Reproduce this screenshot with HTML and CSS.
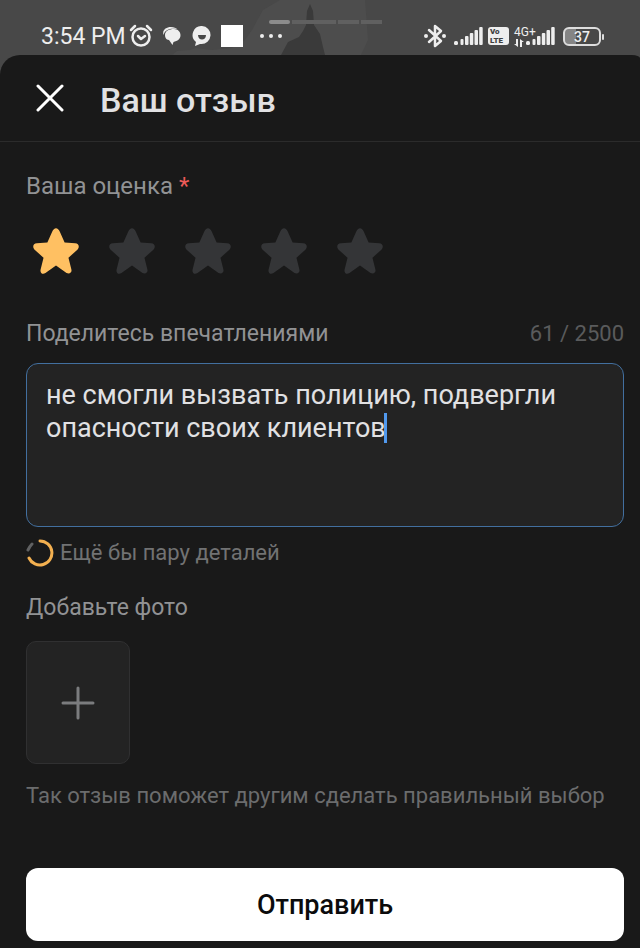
FILE: index.html
```html
<!DOCTYPE html>
<html lang="ru">
<head>
<meta charset="utf-8">
<meta name="viewport" content="width=device-width, initial-scale=1">
<title>Ваш отзыв</title>
<link rel="stylesheet" href="styles.css">
</head>
<body>
<div class="statusbar">
  <svg class="backdrop" viewBox="0 0 640 80" preserveAspectRatio="none" aria-hidden="true">
    <path class="cloud" d="M170 57 177 51 190 50 196 48 212 50 232 48 245 40 252 30 263 10 280 0H365L368 40 360 57Z"/>
    <path class="tower" d="M281 55 288 42 299 37 303 31 306 25 307 11 310 4 313 11 314 25 320 34 323 47 325 55Z"/>
  </svg>
  <div class="pages" aria-hidden="true"><i class="current"></i><i></i><i></i><i></i></div>
  <div class="status-left">
    <span class="clock">3:54 PM</span>
    <svg width="24" height="24" viewBox="0 0 24 24" aria-hidden="true"><g fill="none" stroke="currentColor" stroke-width="2.5" stroke-linecap="round" stroke-linejoin="round"><circle cx="12" cy="13" r="8.5"/><path d="m9 12 3 3 4-3M2 6l4-4M18 2l4 4"/></g></svg>
    <svg class="chat" width="18" height="20" viewBox="0 0 18 20" aria-hidden="true"><path fill="currentColor" d="M0.500 9C-1 4 3 1 8 1c3 0 5 1 6 2C8 2 2 3 .5 9Z"/><path fill="currentColor" d="M2 9c0-4 4-6 9-6 4 0 6.500 3 6.500 6 0 4-3 6-7 7L9.500 19 6 14C3 14 2 11 2 9Z"/></svg>
    <svg class="smile" width="20" height="20" viewBox="0 0 20 20" aria-hidden="true"><path fill="currentColor" d="M10 0a9 9 0 1 1-1 18H8l-5 2 1-4A9 9 0 0 1 10 0Z"/><path fill="#484848" d="M6 9h8c0 6-8 6-8 0Z"/></svg>
    <i class="square"></i>
    <svg class="dots" width="22" height="6" viewBox="0 0 22 6" fill="currentColor" aria-hidden="true"><circle cx="2" cy="3" r="2"/><circle cx="11" cy="3" r="2"/><circle cx="20" cy="3" r="2"/></svg>
  </div>
  <div class="status-right">
    <svg width="22" height="24" viewBox="0 0 22 24" aria-hidden="true"><path fill="none" stroke="currentColor" stroke-width="2.5" stroke-linejoin="round" stroke-linecap="round" d="m5 6 12 11-6 5V2l6 5L5 18"/><circle cx="2" cy="12" r="2" fill="currentColor"/><circle cx="20" cy="12" r="2" fill="currentColor"/></svg>
    <svg class="signal" width="29" height="20" viewBox="0 0 29 20" fill="currentColor" aria-hidden="true"><rect y="15" width="4" height="4" rx="1.500"/><rect x="6.500" y="13" width="3" height="6" rx="1"/><rect x="11" y="10" width="3.500" height="9" rx="1"/><rect x="15.800" y="7" width="3.500" height="12" rx="1"/><rect x="20.500" y="4" width="3.500" height="15" rx="1"/><rect x="25.200" y="1" width="3.500" height="18" rx="1"/></svg>
    <span class="volte"><span>Vo</span><span>LTE</span></span>
    <span class="network"><span>4G+</span><svg width="10" height="8" viewBox="0 0 10 8" aria-hidden="true"><path fill="currentColor" d="M2 0h2v8L0 5h2ZM6 8V0l4 3H8v5Z"/></svg></span>
    <svg class="signal second" width="29" height="20" viewBox="0 0 29 20" fill="currentColor" aria-hidden="true"><rect y="15" width="4" height="4" rx="1.500"/><rect x="6.500" y="13" width="3" height="6" rx="1"/><rect x="11" y="10" width="3.500" height="9" rx="1"/><rect x="15.800" y="7" width="3.500" height="12" rx="1"/><rect x="20.500" y="4" width="3.500" height="15" rx="1"/><rect x="25.200" y="1" width="3.500" height="18" rx="1"/></svg>
    <span class="battery">37</span>
  </div>
</div>
<main class="sheet">
  <header class="header">
    <button class="close" type="button" aria-label="Закрыть"><svg width="28" height="28" viewBox="0 0 28 28" aria-hidden="true"><path fill="none" stroke="currentColor" stroke-width="3" stroke-linecap="round" d="m2 2 24 24M26 2 2 26"/></svg></button>
    <h1>Ваш отзыв</h1>
  </header>
  <form class="form">
    <fieldset class="rating">
      <legend>Ваша оценка <span class="required">*</span></legend>
      <div class="stars">
        <label class="star"><input type="radio" name="rating" value="1" aria-label="1" checked><svg viewBox="0 0 48 48" aria-hidden="true"><path d="M20 4c2-5 6-5 8 0l5 11 11 1c4 0 5 4 2 7l-9 8 3 12c1 4-2 5-5 4l-11-8-11 8c-3 2-6 0-5-4l3-12-9-8c-3-3-2-7 2-7l11-1Z"/></svg></label>
        <label class="star"><input type="radio" name="rating" value="2" aria-label="2"><svg viewBox="0 0 48 48" aria-hidden="true"><path d="M20 4c2-5 6-5 8 0l5 11 11 1c4 0 5 4 2 7l-9 8 3 12c1 4-2 5-5 4l-11-8-11 8c-3 2-6 0-5-4l3-12-9-8c-3-3-2-7 2-7l11-1Z"/></svg></label>
        <label class="star"><input type="radio" name="rating" value="3" aria-label="3"><svg viewBox="0 0 48 48" aria-hidden="true"><path d="M20 4c2-5 6-5 8 0l5 11 11 1c4 0 5 4 2 7l-9 8 3 12c1 4-2 5-5 4l-11-8-11 8c-3 2-6 0-5-4l3-12-9-8c-3-3-2-7 2-7l11-1Z"/></svg></label>
        <label class="star"><input type="radio" name="rating" value="4" aria-label="4"><svg viewBox="0 0 48 48" aria-hidden="true"><path d="M20 4c2-5 6-5 8 0l5 11 11 1c4 0 5 4 2 7l-9 8 3 12c1 4-2 5-5 4l-11-8-11 8c-3 2-6 0-5-4l3-12-9-8c-3-3-2-7 2-7l11-1Z"/></svg></label>
        <label class="star"><input type="radio" name="rating" value="5" aria-label="5"><svg viewBox="0 0 48 48" aria-hidden="true"><path d="M20 4c2-5 6-5 8 0l5 11 11 1c4 0 5 4 2 7l-9 8 3 12c1 4-2 5-5 4l-11-8-11 8c-3 2-6 0-5-4l3-12-9-8c-3-3-2-7 2-7l11-1Z"/></svg></label>
      </div>
    </fieldset>
    <div class="field-head"><label for="review">Поделитесь впечатлениями</label><span class="count">61 / 2500</span></div>
    <div class="editor">
      <textarea id="review" maxlength="2500" spellcheck="false">не смогли вызвать полицию, подвергли опасности своих клиентов</textarea>
      <i class="caret"></i>
    </div>
    <p class="hint"><svg width="28" height="28" viewBox="0 0 28 28" fill="none" stroke-width="3" stroke-linecap="round" aria-hidden="true"><path stroke="#f3b050" d="M14 2a12 12 0 1 1-11 17"/><path stroke="#606162" d="M2 11c1-2 2-4 4-6"/></svg>Ещё бы пару деталей</p>
    <h2 class="photo-title">Добавьте фото</h2>
    <button class="add-photo" type="button" aria-label="Добавить фото"><svg width="34" height="34" viewBox="0 0 34 34" aria-hidden="true"><path stroke="currentColor" stroke-width="3" stroke-linecap="round" d="M17 2v30M2 17h30"/></svg></button>
    <p class="note">Так отзыв поможет другим сделать правильный выбор</p>
    <button class="submit" type="submit">Отправить</button>
  </form>
</main>
</body>
</html>
```
FILE: styles.css
```css
* { box-sizing: border-box; }
body {
  margin: 0;
  min-height: 100vh;
  display: flex;
  flex-direction: column;
  background: #484848;
  color: #e1e1e3;
  font-family: Roboto, sans-serif;
}
button { font: inherit; border: 0; cursor: pointer; }
svg { display: block; flex: none; }

.statusbar {
  position: relative;
  display: flex;
  justify-content: space-between;
  height: 55px;
  padding: 16px 34px 0 41px;
  color: #eee;
}
.backdrop { position: absolute; left: 0; top: 0; width: 100%; height: 80px; }
.cloud { fill: #4d4d4d; }
.tower { fill: #3a3a3a; }
.pages {
  position: absolute;
  top: 20px;
  left: 42%;
  display: flex;
  gap: 2px;
}
.pages i { width: 21px; height: 4px; background: #606060; }
.pages i:nth-child(2) { width: 44px; }
.pages .current { background: #8c8c8c; border-radius: 2px; }
.status-left, .status-right { position: relative; display: flex; align-items: center; height: 40px; }
.clock { font-size: 23px; font-weight: 400; margin-right: 3px; }
.chat { margin-left: 10px; }
.smile { margin-left: 11px; }
.square { width: 22px; height: 22px; margin-left: 9px; background: #fff; }
.dots { margin-left: 17px; }
.signal { margin-left: 8px; }
.signal.second { margin-left: 1px; }
.volte {
  display: flex;
  flex-direction: column;
  width: 21px;
  height: 18px;
  margin-left: 5px;
  padding: 0 2px;
  border-radius: 3px;
  background: #eee;
  color: #404040;
  font-size: 8px;
  font-weight: 900;
  line-height: 9px;
}
.network { width: 11px; margin-left: 5px; font-size: 12px; line-height: 13px; white-space: nowrap; }
.battery {
  position: relative;
  width: 38px;
  height: 19px;
  margin: 0 5px 0 8px;
  border: 2px solid #ddd;
  border-radius: 6px;
  background: linear-gradient(90deg, #858585 11px, transparent 11px);
  font-size: 14px;
  font-weight: 500;
  line-height: 16px;
  text-align: center;
}
.battery::after {
  content: "";
  position: absolute;
  right: -5px;
  top: 5px;
  width: 2px;
  height: 6px;
  border-radius: 1px;
  background: #ddd;
}

.sheet {
  position: relative;
  flex: 1;
  border-radius: 20px 8px 0 0 / 20px 3px 0 0;
  background: #191919;
}
.header {
  display: flex;
  align-items: center;
  gap: 36px;
  height: 87px;
  padding-left: 36px;
  border-bottom: 1px solid #2b2b2b;
}
.close { padding: 0; background: none; color: #fff; }
h1 { margin: 0; padding-top: 4px; font-size: 34px; font-weight: 500; line-height: 44px; }

.form { display: flex; flex-direction: column; padding: 28px 16px 7px 26px; }
.rating { min-width: 0; margin: 0; padding: 0; border: 0; }
legend, .field-head, .photo-title { padding: 0; font-size: 23px; font-weight: 400; line-height: 32px; color: #919294; }
legend { font-size: 24px; }
.required { color: #ec5b58; }
.stars { display: flex; gap: 30px; padding: 26px 7px 0; }
.star { position: relative; width: 46px; height: 46px; color: #343537; cursor: pointer; }
.star input { position: absolute; inset: 0; width: 100%; height: 100%; margin: 0; opacity: 0; }
.star svg { width: 46px; height: 46px; fill: currentColor; }
.star:has(:checked) { color: #ffc062; }
.field-head { display: flex; justify-content: space-between; margin-top: 44px; }
.count { font-size: 22px; color: #5a5b5c; }
.editor { position: relative; margin-top: 13px; }
textarea {
  display: block;
  width: 100%;
  height: 164px;
  padding: 15px 19px;
  border: 1px solid #426f9f;
  border-radius: 12px;
  outline: 0;
  resize: none;
  background: #232323;
  color: #e1e1e3;
  font: 27px/33px Roboto, sans-serif;
}
.caret { position: absolute; left: 358px; top: 50px; width: 3px; height: 30px; background: #5199ee; }
.hint { display: flex; align-items: center; gap: 6px; margin: 12px 0 0; font-size: 22px; line-height: 28px; color: #717273; }
.photo-title { margin: 25px 0 0; }
.add-photo {
  display: grid;
  place-items: center;
  width: 104px;
  height: 123px;
  margin-top: 17px;
  border: 1px solid #303031;
  border-radius: 10px;
  background: #232323;
  color: #7b7c7e;
}
.note { margin: 18px 0 0; font-size: 22px; line-height: 28px; color: #6b6c6d; }
.submit {
  height: 73px;
  margin-top: 58px;
  border-radius: 12px;
  background: #fff;
  color: #0b0b0c;
  font-size: 27px;
  font-weight: 500;
}
```
